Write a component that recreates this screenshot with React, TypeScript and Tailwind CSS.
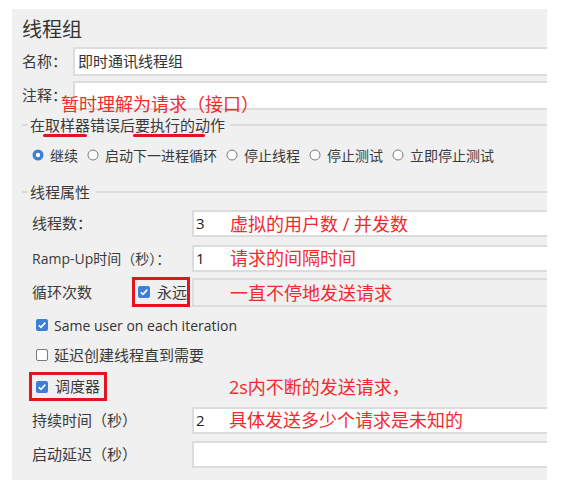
const font = { fontFamily: "'Open Sans', 'Noto Sans CJK SC', sans-serif" };

function Radio({ checked }: { checked?: boolean }) {
  return (
    <svg width="12" height="12" viewBox="0 0 12 12" className="shrink-0">
      {checked ? (
        <>
          <circle cx="6" cy="6" r="5.5" fill="#3d7fd6" />
          <circle cx="6" cy="6" r="2.2" fill="#ffffff" />
        </>
      ) : (
        <circle cx="6" cy="6" r="5" fill="#ffffff" stroke="#7a7a7a" strokeWidth="1" />
      )}
    </svg>
  );
}

function Check({ checked }: { checked?: boolean }) {
  return (
    <svg width="12" height="12" viewBox="0 0 12 12" className="shrink-0">
      {checked ? (
        <>
          <rect x="0" y="0" width="12" height="12" rx="2" fill="#3d7fd6" />
          <path d="M2.8 6.2 L5 8.4 L9.3 3.6" fill="none" stroke="#ffffff" strokeWidth="1.6" />
        </>
      ) : (
        <rect x="0.5" y="0.5" width="11" height="11" rx="1.5" fill="#ffffff" stroke="#7a7a7a" />
      )}
    </svg>
  );
}

function Legend({ title }: { title: string }) {
  return (
    <div className="flex items-center h-[20px] pl-[10px]">
      <div className="w-[6px] h-[2px] bg-[#dcdcdc]" />
      <span className="px-[2px] text-[15px] text-[#3a3a3a] leading-none">{title}</span>
      <div className="flex-1 h-[2px] bg-[#dcdcdc] ml-[4px]" />
    </div>
  );
}

function Field({ label, value, className, small }: { label: string; value?: string; className?: string; small?: boolean }) {
  return (
    <div className={"flex items-center h-[27px] " + (className ?? "")}>
      <div className={"w-[180px] pl-[20px] text-[#3a3a3a] whitespace-nowrap " + (small ? "text-[14px]" : "text-[15px]")}>
        {label}
      </div>
      <div className="flex-1 -mr-[4px] h-full bg-white border-2 border-[#dcdcdc] flex items-center pl-[2px] text-[15px] text-[#222]">
        {value}
      </div>
    </div>
  );
}

const red = "absolute text-[18px] leading-none text-[#f22a2d] whitespace-nowrap";

export default function App() {
  return (
    <div className="w-[563px] h-[491px] bg-white overflow-hidden" style={font}>
      <div className="relative ml-[12px] mt-[9px] w-[535px] h-[471px] bg-[#f0f0f0] overflow-hidden">
        <div className="mt-[3px] h-[35px] leading-[35px] pl-[10px] text-[20px] text-[#333]">线程组</div>

        <div className="flex items-center h-[29px]">
          <div className="w-[61px] pl-[10px] text-[15px] text-[#3a3a3a]">名称：</div>
          <div className="flex-1 -mr-[4px] h-full bg-white border-2 border-[#dcdcdc] flex items-center pl-[3px] text-[15px] text-[#333]">
            即时通讯线程组
          </div>
        </div>
        <div className="flex items-center h-[29px] mt-[5px]">
          <div className="w-[61px] pl-[10px] text-[15px] text-[#3a3a3a]">注释：</div>
          <div className="flex-1 -mr-[4px] h-full bg-white border-2 border-[#dcdcdc]" />
        </div>

        <div className="mt-[5px]">
          <Legend title="在取样器错误后要执行的动作" />
        </div>

        <div className="mt-[10px] h-[20px] flex items-center pl-[20px] text-[14px] text-[#3a3a3a]">
          {[
            ["继续", true],
            ["启动下一进程循环", false],
            ["停止线程", false],
            ["停止测试", false],
            ["立即停止测试", false],
          ].map(([t, c]) => (
            <div key={t as string} className="flex items-center gap-[6px] mr-[9px]">
              <Radio checked={c as boolean} />
              <span>{t as string}</span>
            </div>
          ))}
        </div>

        <div className="mt-[17px]">
          <Legend title="线程属性" />
        </div>

        <Field label="线程数：" value="3" className="mt-[8px]" />
        <Field label="Ramp-Up时间（秒）：" value="1" className="mt-[8px]" small />

        <div className="flex items-center h-[30px] mt-[5px]">
          <div className="w-[120px] pl-[20px] text-[15px] text-[#3a3a3a]">循环次数</div>
          <div className="w-[58px] h-[30px] border-[3px] border-[#e3141c] flex items-center pl-[3px] gap-[7px] text-[15px] text-[#3a3a3a]">
            <Check checked />
            <span>永远</span>
          </div>
          <div className="flex-1 ml-[2px] -mr-[4px] h-[29px] bg-[#f0f0f0] border-2 border-[#dcdcdc]" />
        </div>

        <div className="mt-[8px] h-[20px] flex items-center pl-[24px] gap-[6px] text-[14px] text-[#333]">
          <Check checked />
          <span>Same user on each iteration</span>
        </div>
        <div className="mt-[10px] h-[20px] flex items-center pl-[24px] gap-[6px] text-[15px] text-[#3a3a3a]">
          <Check />
          <span>延迟创建线程直到需要</span>
        </div>
        <div className="mt-[7px] ml-[17px] w-[78px] h-[29px] border-[3px] border-[#e3141c] flex items-center pl-[4px] gap-[7px] text-[15px] text-[#3a3a3a]">
          <Check checked />
          <span>调度器</span>
        </div>

        <Field label="持续时间（秒）" value="2" className="mt-[6px]" />
        <Field label="启动延迟（秒）" className="mt-[7px]" />

        <div className="absolute left-[31px] top-[125px] w-[44px] h-[3px] rounded-full bg-[#e3141c]" />
        <div className="absolute left-[121px] top-[125px] w-[72px] h-[3px] rounded-full bg-[#e3141c]" />

        <div className={red + " left-[49px] top-[86px]"}>暂时理解为请求（接口）</div>
        <div className={red + " left-[218px] top-[206px]"}>虚拟的用户数 / 并发数</div>
        <div className={red + " left-[218px] top-[240px]"}>请求的间隔时间</div>
        <div className={red + " left-[218px] top-[275px]"}>一直不停地发送请求</div>
        <div className={red + " left-[217px] top-[369px]"}>2s内不断的发送请求，</div>
        <div className={red + " left-[217px] top-[402px]"}>具体发送多少个请求是未知的</div>
      </div>
    </div>
  );
}
